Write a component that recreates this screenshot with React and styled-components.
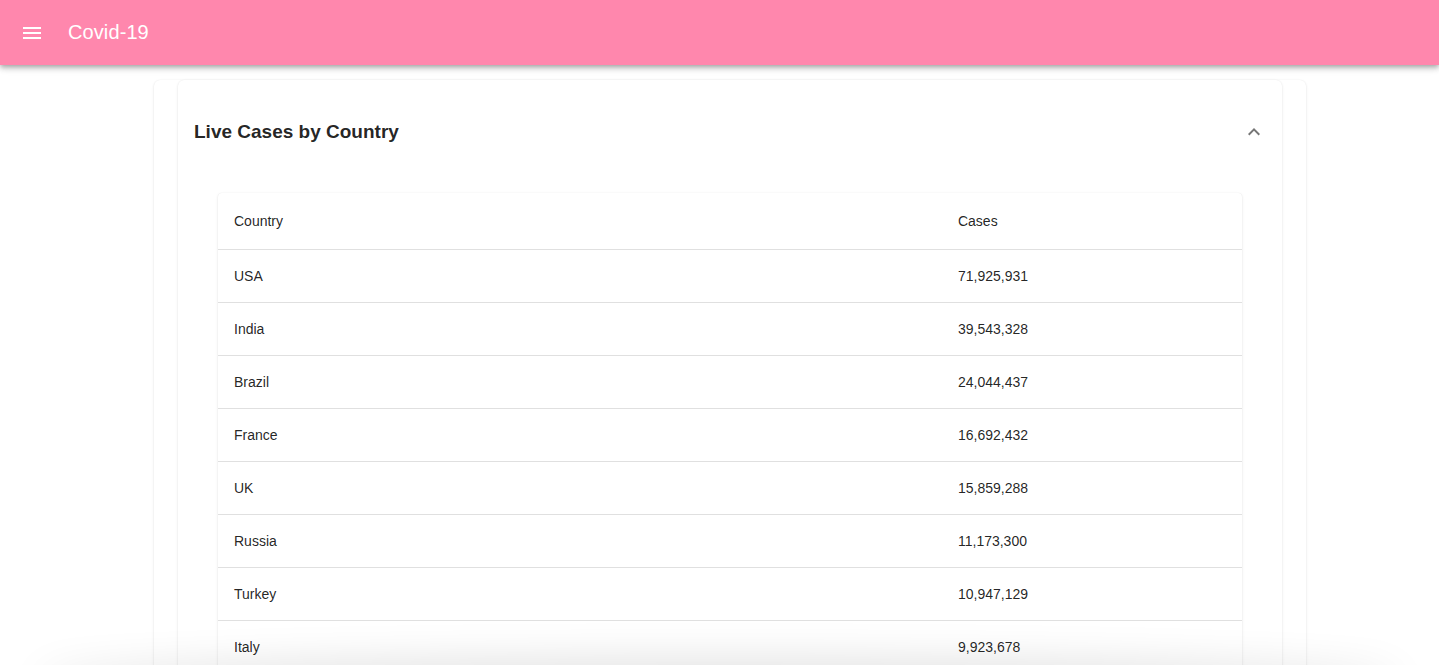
import React from 'react';
import styled, { createGlobalStyle } from 'styled-components';

const GlobalStyle = createGlobalStyle`
    html, body {
        margin: 0;
        padding: 0;
        background: #fff;
        font-family: "Liberation Sans", Arial, Helvetica, sans-serif;
        color: rgba(0, 0, 0, 0.87);
    }
`;

const rows = [
    ['USA', '71,925,931'],
    ['India', '39,543,328'],
    ['Brazil', '24,044,437'],
    ['France', '16,692,432'],
    ['UK', '15,859,288'],
    ['Russia', '11,173,300'],
    ['Turkey', '10,947,129'],
    ['Italy', '9,923,678'],
];

const App = () => {
    return (
        <>
            <GlobalStyle />
            <AppBar>
                <MenuButton aria-label="menu">
                    <svg width="24" height="24" viewBox="0 0 24 24" fill="#fff">
                        <path d="M3 18h18v-2H3v2zm0-5h18v-2H3v2zm0-7v2h18V6H3z" />
                    </svg>
                </MenuButton>
                <Title>Covid-19</Title>
            </AppBar>
            <Main>
                <OuterCard>
                    <Accordion>
                        <Summary>
                            <Heading>Live Cases by Country</Heading>
                            <ExpandIcon>
                                <svg width="24" height="24" viewBox="0 0 24 24" fill="rgba(0,0,0,0.54)">
                                    <path d="M12 8l-6 6 1.41 1.41L12 10.83l4.59 4.58L18 14z" />
                                </svg>
                            </ExpandIcon>
                        </Summary>
                        <Details>
                            <TablePaper>
                                <Table>
                                    <thead>
                                        <tr>
                                            <HeadCell width="70.7%">Country</HeadCell>
                                            <HeadCell>Cases</HeadCell>
                                        </tr>
                                    </thead>
                                    <tbody>
                                        {rows.map(([country, cases]) => (
                                            <tr key={country}>
                                                <Cell>{country}</Cell>
                                                <Cell>{cases}</Cell>
                                            </tr>
                                        ))}
                                    </tbody>
                                </Table>
                            </TablePaper>
                        </Details>
                    </Accordion>
                </OuterCard>
            </Main>
            <BottomShade />
        </>
    );
};

export default App;

//APP BAR
const AppBar = styled.header`
    height: 65px;
    background: #ff87ad;
    display: flex;
    align-items: center;
    padding: 0 20px;
    box-sizing: border-box;
    box-shadow: 0 2px 4px -1px rgba(0,0,0,0.2), 0 4px 5px 0 rgba(0,0,0,0.14), 0 1px 10px 0 rgba(0,0,0,0.12);
    position: relative;
    z-index: 2;
`;

const MenuButton = styled.div`
    width: 24px;
    height: 24px;
    display: flex;
    margin-right: 24px;
    svg { display: block; }
`;

const Title = styled.h1`
    margin: 0;
    font-size: 20px;
    font-weight: 400;
    color: #fff;
    letter-spacing: 0.1px;
`;

//PAGE
const Main = styled.main`
    padding: 15px 133px 0 154px;
`;

const OuterCard = styled.div`
    background: #fff;
    border-radius: 6px;
    padding: 0 24px;
    box-shadow: 0 1px 3px rgba(0,0,0,0.1), 0 0 1px rgba(0,0,0,0.08);
`;

const Accordion = styled.section`
    background: #fff;
    border-radius: 6px;
    box-shadow: 0 1px 3px rgba(0,0,0,0.1), 0 0 1px rgba(0,0,0,0.08);
`;

const Summary = styled.div`
    height: 102px;
    display: flex;
    align-items: center;
    justify-content: space-between;
    padding: 2px 16px 0;
    box-sizing: border-box;
`;

const Heading = styled.h2`
    margin: 0;
    font-size: 19px;
    font-weight: 700;
    color: rgba(0,0,0,0.87);
`;

const ExpandIcon = styled.div`
    width: 24px;
    height: 24px;
    svg { display: block; }
`;

const Details = styled.div`
    padding: 11px 40px 24px;
`;

//TABLE
const TablePaper = styled.div`
    background: #fff;
    border-radius: 4px;
    box-shadow: 0 1px 3px rgba(0,0,0,0.1), 0 0 1px rgba(0,0,0,0.1);
    overflow: hidden;
`;

const Table = styled.table`
    width: 100%;
    border-collapse: collapse;
    font-size: 14px;
`;

const HeadCell = styled.th`
    text-align: left;
    font-weight: 400;
    height: 56px;
    padding: 0 16px;
    border-bottom: 1px solid #e0e0e0;
    color: rgba(0,0,0,0.87);
    width: ${p => p.width || 'auto'};
`;

const Cell = styled.td`
    height: 53px;
    padding: 0 16px;
    border-bottom: 1px solid #e0e0e0;
    color: rgba(0,0,0,0.87);
    box-sizing: border-box;
`;

//WINDOW EDGE SHADOW
const BottomShade = styled.div`
    position: fixed;
    left: 40px;
    right: 40px;
    bottom: -30px;
    height: 30px;
    border-radius: 50%;
    box-shadow: 0 0 40px 6px rgba(0,0,0,0.12);
    pointer-events: none;
`;
